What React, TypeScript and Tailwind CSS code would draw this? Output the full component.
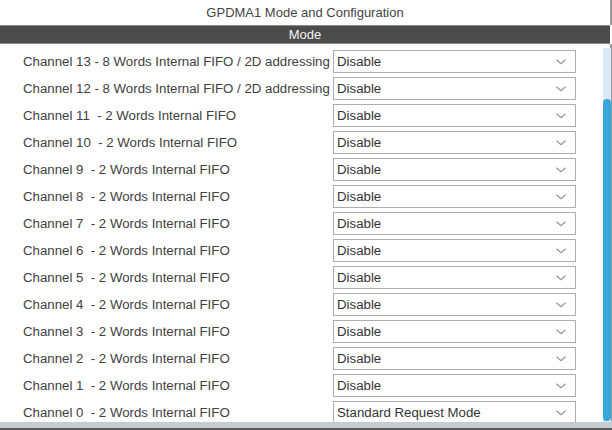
const channels = [
  { label: "Channel 13 - 8 Words Internal FIFO / 2D addressing", value: "Disable" },
  { label: "Channel 12 - 8 Words Internal FIFO / 2D addressing", value: "Disable" },
  { label: "Channel 11  - 2 Words Internal FIFO", value: "Disable" },
  { label: "Channel 10  - 2 Words Internal FIFO", value: "Disable" },
  { label: "Channel 9  - 2 Words Internal FIFO", value: "Disable" },
  { label: "Channel 8  - 2 Words Internal FIFO", value: "Disable" },
  { label: "Channel 7  - 2 Words Internal FIFO", value: "Disable" },
  { label: "Channel 6  - 2 Words Internal FIFO", value: "Disable" },
  { label: "Channel 5  - 2 Words Internal FIFO", value: "Disable" },
  { label: "Channel 4  - 2 Words Internal FIFO", value: "Disable" },
  { label: "Channel 3  - 2 Words Internal FIFO", value: "Disable" },
  { label: "Channel 2  - 2 Words Internal FIFO", value: "Disable" },
  { label: "Channel 1  - 2 Words Internal FIFO", value: "Disable" },
  { label: "Channel 0  - 2 Words Internal FIFO", value: "Standard Request Mode" },
];

export default function App() {
  return (
    <div className="relative w-[612px] h-[430px] overflow-hidden bg-white font-['Liberation_Sans',Arial,sans-serif] text-[13px] text-[#3c3c3c]">
      {/* -- Title -- */}
      <div className="h-[25px] flex items-center justify-center border-r-2 border-[#9a9a9a] text-[#444]">
        GPDMA1 Mode and Configuration
      </div>
      <div className="h-[19px] flex items-center justify-center bg-[#4b4c4b] border-y border-[#8a8a8a] text-[#f2f2f2] mr-[2px]">
        Mode
      </div>

      {/* -- Channel list -- */}
      <div className="h-[378px] border-r-2 border-[#9a9a9a] pt-[4px]">
        {channels.map((c) => (
          <div key={c.label} className="h-[27px] flex items-center">
            <div className="w-[333px] pl-[23px] whitespace-pre text-[13.25px] text-[#404040]">{c.label}</div>
            <div className="w-[243px] h-[23px] border border-[#adadad] flex items-center justify-between pl-[3px] pr-[9px] text-[#333] text-[13.25px]">
              <span>{c.value}</span>
              <svg width="10" height="6" viewBox="0 0 10 6" className="mt-[1px]">
                <polyline points="0.5,0.8 5,4.8 9.5,0.8" fill="none" stroke="#949494" strokeWidth="1.2" />
              </svg>
            </div>
          </div>
        ))}
      </div>

      {/* -- Scrollbar -- */}
      <div className="absolute left-[603px] top-[48px] w-[8px] h-[374px] bg-[#dce9f6]">
        <div className="absolute left-0 top-[51px] w-[8px] h-[322px] rounded-[4px] bg-[#37a6dc]" />
      </div>

      {/* -- Bottom bar -- */}
      <div className="absolute left-0 bottom-0 w-[612px] h-[8px] bg-[#c6cdd1] border-b-2 border-[#5b5b5b]" />
    </div>
  );
}
